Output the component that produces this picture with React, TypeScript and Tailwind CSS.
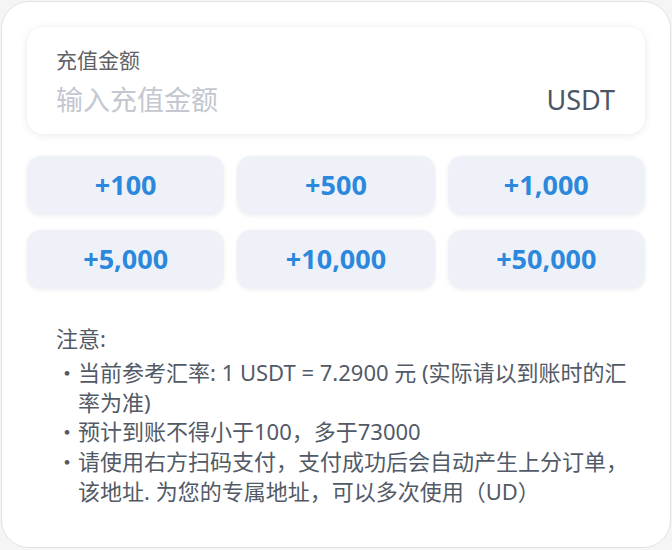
import { useState } from "react"

const presets = ["+100", "+500", "+1,000", "+5,000", "+10,000", "+50,000"]

export default function App() {
    const [amount, setAmount] = useState("")

    return (
        <div
            className="min-h-screen bg-[#f5f5f5] p-px"
            style={{ fontFamily: '"Noto Sans", "Noto Sans CJK SC", sans-serif' }}
        >
            <div className="bg-white border border-[#e2e2e2] rounded-[28px] px-[25px] pt-[25px] pb-[40px]">
                {/* amount input */}
                <div className="bg-white rounded-[16px] shadow-[0_1px_8px_rgba(0,0,0,0.09)] pl-[29px] pr-[30px] pt-[18px] pb-[16px]">
                    <div className="text-[21px] leading-[30px] text-[#5f6166]">充值金额</div>
                    <div className="flex items-center mt-[7px]">
                        <input
                            type="text"
                            value={amount}
                            onChange={(e) => setAmount(e.target.value)}
                            placeholder="输入充值金额"
                            className="flex-1 min-w-0 bg-transparent text-[27px] leading-[36px] text-[#4a5568] placeholder:text-[#c3c7cf] focus:outline-none"
                        />
                        <span className="text-[27px] leading-[36px] text-[#4a5568]">USDT</span>
                    </div>
                </div>

                {/* quick amounts */}
                <div className="grid grid-cols-3 gap-x-[13px] gap-y-[15px] mt-[22px]">
                    {presets.map((p) => (
                        <button
                            key={p}
                            className="h-[59px] rounded-[14px] bg-[#eef2f8] shadow-[0_1px_4px_rgba(0,0,0,0.07)] text-[27px] font-bold text-[#2b88dc]"
                        >
                            {p}
                        </button>
                    ))}
                </div>

                {/* notes */}
                <div className="mt-[35px] pl-[29px] pr-[9px] text-[22px] leading-[29.75px] text-[#525a66]">
                    <div className="mb-[4px]">注意:</div>
                    <div className="flex">
                        <span className="shrink-0">・</span>
                        <span>当前参考汇率: 1 USDT = 7.2900 元 (实际请以到账时的汇率为准)</span>
                    </div>
                    <div className="flex">
                        <span className="shrink-0">・</span>
                        <span>预计到账不得小于100，多于73000</span>
                    </div>
                    <div className="flex">
                        <span className="shrink-0">・</span>
                        <span>请使用右方扫码支付，支付成功后会自动产生上分订单，该地址. 为您的专属地址，可以多次使用（UD）</span>
                    </div>
                </div>
            </div>
        </div>
    )
}
